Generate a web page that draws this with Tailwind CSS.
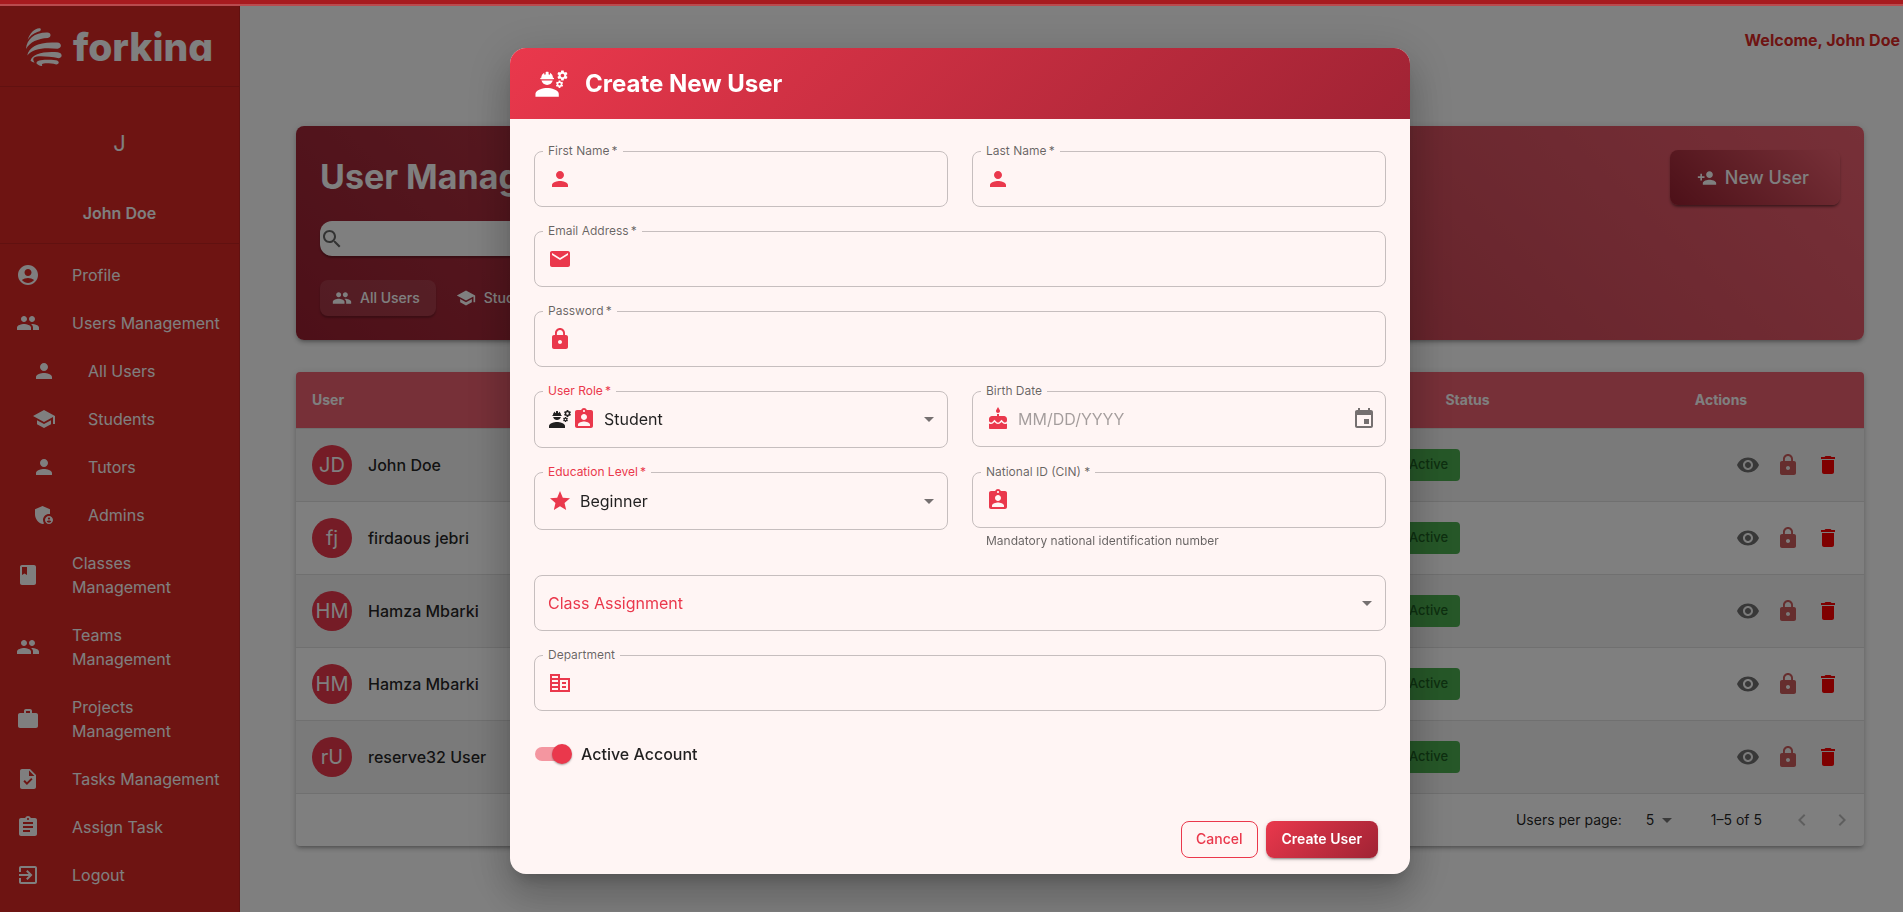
<!DOCTYPE html>
<html lang="en">
<head>
<meta charset="utf-8">
<meta name="viewport" content="width=device-width, initial-scale=1">
<title>Forkina – User Management</title>
<script src="https://cdn.jsdelivr.net/npm/@tailwindcss/browser@4"></script>
</head>
<body class="min-h-screen bg-white font-['Inter',sans-serif] text-base text-black/87">

<svg class="hidden" aria-hidden="true">
  <symbol id="account" viewBox="0 0 24 24"><path d="M12 2C6.48 2 2 6.48 2 12s4.48 10 10 10 10-4.48 10-10S17.52 2 12 2zm0 4c1.93 0 3.5 1.57 3.5 3.5S13.93 13 12 13s-3.5-1.57-3.5-3.5S10.07 6 12 6zm0 14c-2.03 0-4.43-.82-6.14-2.88C7.55 15.8 9.68 15 12 15s4.45.8 6.14 2.12C16.43 19.18 14.03 20 12 20z"/></symbol>
  <symbol id="people" viewBox="0 0 24 24"><path d="M16 11c1.66 0 2.99-1.34 2.99-3S17.66 5 16 5c-1.66 0-3 1.34-3 3s1.34 3 3 3zm-8 0c1.66 0 2.99-1.34 2.99-3S9.66 5 8 5C6.34 5 5 6.34 5 8s1.34 3 3 3zm0 2c-2.33 0-7 1.17-7 3.5V19h14v-2.5c0-2.33-4.67-3.5-7-3.5zm8 0c-.29 0-.62.02-.97.05 1.16.84 1.97 1.97 1.97 3.45V19h6v-2.5c0-2.33-4.67-3.5-7-3.5z"/></symbol>
  <symbol id="person" viewBox="0 0 24 24"><path d="M12 12c2.21 0 4-1.79 4-4s-1.79-4-4-4-4 1.79-4 4 1.79 4 4 4zm0 2c-2.67 0-8 1.34-8 4v2h16v-2c0-2.66-5.33-4-8-4z"/></symbol>
  <symbol id="person-add" viewBox="0 0 24 24"><path d="M15 12c2.21 0 4-1.79 4-4s-1.79-4-4-4-4 1.79-4 4 1.79 4 4 4zm-9-2V7H4v3H1v2h3v3h2v-3h3v-2H6zm9 4c-2.67 0-8 1.34-8 4v2h16v-2c0-2.66-5.33-4-8-4z"/></symbol>
  <symbol id="school" viewBox="0 0 24 24"><path d="M5 13.18v4L12 21l7-3.82v-4L12 17l-7-3.82zM12 3 1 9l11 6 9-4.91V17h2V9L12 3z"/></symbol>
  <symbol id="admin" viewBox="0 0 24 24"><path d="M17 11c.34 0 .67.04 1 .09V6.27L10.5 3 3 6.27v4.91c0 4.54 3.2 8.79 7.5 9.82.55-.13 1.08-.32 1.6-.55-.69-.98-1.1-2.17-1.1-3.45 0-3.31 2.69-6 6-6z"/><path d="M17 13c-2.21 0-4 1.79-4 4s1.79 4 4 4 4-1.79 4-4-1.79-4-4-4zm0 1.38c.62 0 1.12.51 1.12 1.12s-.51 1.12-1.12 1.12-1.12-.51-1.12-1.12.5-1.12 1.12-1.12zm0 5.37c-.93 0-1.74-.46-2.24-1.17.05-.72 1.51-1.08 2.24-1.08s2.19.36 2.24 1.08c-.5.71-1.31 1.17-2.24 1.17z"/></symbol>
  <symbol id="class" viewBox="0 0 24 24"><path d="M18 2H6c-1.1 0-2 .9-2 2v16c0 1.1.9 2 2 2h12c1.1 0 2-.9 2-2V4c0-1.1-.9-2-2-2zM6 4h5v8l-2.500-1.500L6 12V4z"/></symbol>
  <symbol id="work" viewBox="0 0 24 24"><path d="M20 6h-4V4c0-1.110-.89-2-2-2h-4c-1.110 0-2 .89-2 2v2H4c-1.110 0-1.990.89-1.990 2L2 19c0 1.110.89 2 2 2h16c1.110 0 2-.89 2-2V8c0-1.110-.89-2-2-2zm-6 0h-4V4h4v2z"/></symbol>
  <symbol id="task" viewBox="0 0 24 24"><path d="M14 2H6c-1.100 0-1.990.9-1.990 2L4 20c0 1.100.89 2 1.990 2H18c1.100 0 2-.9 2-2V8l-6-6zm-3.060 16L7.400 14.460l1.410-1.410 2.120 2.120 4.240-4.240 1.410 1.410L10.940 18zM13 9V3.500L18.500 9H13z"/></symbol>
  <symbol id="assignment" viewBox="0 0 24 24"><path d="M19 3h-4.180C14.400 1.840 13.300 1 12 1c-1.300 0-2.400.84-2.820 2H5c-1.100 0-2 .9-2 2v14c0 1.100.9 2 2 2h14c1.100 0 2-.9 2-2V5c0-1.100-.9-2-2-2zm-7 0c.55 0 1 .45 1 1s-.45 1-1 1-1-.45-1-1 .45-1 1-1zm2 14H7v-2h7v2zm3-4H7v-2h10v2zm0-4H7V7h10v2z"/></symbol>
  <symbol id="logout" viewBox="0 0 24 24"><path d="M10.090 15.590 11.500 17l5-5-5-5-1.410 1.410L12.670 11H3v2h9.670l-2.580 2.590zM19 3H5c-1.110 0-2 .9-2 2v4h2V5h14v14H5v-4H3v4c0 1.100.89 2 2 2h14c1.100 0 2-.9 2-2V5c0-1.100-.9-2-2-2z"/></symbol>
  <symbol id="search" viewBox="0 0 24 24"><path d="M15.500 14h-.79l-.28-.27C15.410 12.590 16 11.110 16 9.500 16 5.910 13.090 3 9.500 3S3 5.910 3 9.500 5.910 16 9.500 16c1.610 0 3.090-.59 4.230-1.570l.27.28v.79l5 4.990L20.490 19l-4.990-5zm-6 0C7.010 14 5 11.990 5 9.500S7.010 5 9.500 5 14 7.010 14 9.500 11.990 14 9.500 14z"/></symbol>
  <symbol id="eye" viewBox="0 0 24 24"><path d="M12 4.500C7 4.500 2.730 7.610 1 12c1.730 4.390 6 7.500 11 7.500s9.270-3.110 11-7.500c-1.730-4.390-6-7.500-11-7.500zM12 17c-2.760 0-5-2.240-5-5s2.240-5 5-5 5 2.240 5 5-2.240 5-5 5zm0-8c-1.660 0-3 1.340-3 3s1.340 3 3 3 3-1.340 3-3-1.340-3-3-3z"/></symbol>
  <symbol id="lock" viewBox="0 0 24 24"><path d="M18 8h-1V6c0-2.760-2.240-5-5-5S7 3.240 7 6v2H6c-1.100 0-2 .9-2 2v10c0 1.100.9 2 2 2h12c1.100 0 2-.9 2-2V10c0-1.100-.9-2-2-2zm-6 9c-1.100 0-2-.9-2-2s.9-2 2-2 2 .9 2 2-.9 2-2 2zm3.100-9H8.900V6c0-1.710 1.390-3.100 3.100-3.100s3.100 1.390 3.100 3.100v2z"/></symbol>
  <symbol id="delete" viewBox="0 0 24 24"><path d="M6 19c0 1.100.9 2 2 2h8c1.100 0 2-.9 2-2V7H6v12zM19 4h-3.500l-1-1h-5l-1 1H5v2h14V4z"/></symbol>
  <symbol id="check" viewBox="0 0 24 24"><path d="M12 2C6.480 2 2 6.480 2 12s4.480 10 10 10 10-4.480 10-10S17.520 2 12 2zm-2 15-5-5 1.410-1.410L10 14.170l7.590-7.590L19 8l-9 9z"/></symbol>
  <symbol id="mail" viewBox="0 0 24 24"><path d="M20 4H4c-1.100 0-1.990.9-1.990 2L2 18c0 1.100.9 2 2 2h16c1.100 0 2-.9 2-2V6c0-1.100-.9-2-2-2zm0 4-8 5-8-5V6l8 5 8-5v2z"/></symbol>
  <symbol id="badge" viewBox="0 0 24 24"><path d="M19 3h-4.180C14.400 1.840 13.300 1 12 1c-1.300 0-2.400.84-2.820 2H5c-1.100 0-2 .9-2 2v14c0 1.100.9 2 2 2h14c1.100 0 2-.9 2-2V5c0-1.100-.9-2-2-2zm-7 0c.55 0 1 .45 1 1s-.45 1-1 1-1-.45-1-1 .45-1 1-1zm0 4c1.660 0 3 1.340 3 3s-1.340 3-3 3-3-1.340-3-3 1.340-3 3-3zm6 12H6v-1.400c0-2 4-3.100 6-3.100s6 1.100 6 3.100V19z"/></symbol>
  <symbol id="star" viewBox="0 0 24 24"><path d="M12 17.270 18.180 21l-1.640-7.030L22 9.240l-7.190-.61L12 2 9.190 8.630 2 9.240l5.460 4.730L5.820 21z"/></symbol>
  <symbol id="cake" viewBox="0 0 24 24"><path d="M12 6c1.110 0 2-.9 2-2 0-.38-.1-.73-.29-1.030L12 0l-1.710 2.970c-.19.3-.29.65-.29 1.030 0 1.100.9 2 2 2zm4.600 9.990-1.070-1.070-1.080 1.070c-1.300 1.300-3.580 1.310-4.890 0l-1.070-1.070-1.090 1.070C6.750 16.640 5.880 17 4.960 17c-.73 0-1.400-.23-1.960-.61V21c0 .55.45 1 1 1h16c.55 0 1-.45 1-1v-4.610c-.56.38-1.230.61-1.960.61-.92 0-1.790-.36-2.440-1.010zM18 9h-5V7h-2v2H6c-1.660 0-3 1.340-3 3v1.540c0 1.080.88 1.960 1.960 1.960.52 0 1.020-.2 1.380-.57l2.140-2.130 2.130 2.130c.74.74 2.030.74 2.770 0l2.140-2.130 2.130 2.130c.37.37.86.57 1.380.57 1.080 0 1.960-.88 1.960-1.960V12C21 10.340 19.660 9 18 9z"/></symbol>
  <symbol id="event" viewBox="0 0 24 24"><path d="M17 12h-5v5h5v-5zM16 1v2H8V1H6v2H5c-1.110 0-1.990.9-1.990 2L3 19c0 1.100.89 2 2 2h14c1.100 0 2-.9 2-2V5c0-1.100-.9-2-2-2h-1V1h-2zm3 18H5V8h14v11z"/></symbol>
  <symbol id="business" viewBox="0 0 24 24"><path d="M12 7V3H2v18h20V7H12zm-2 12H4v-2h6v2zm0-4H4v-2h6v2zm0-4H4V9h6v2zm0-4H4V5h6v2zm10 12h-8V9h8v10zm-2-8h-4v2h4v-2zm0 4h-4v2h4v-2z"/></symbol>
  <symbol id="arrow" viewBox="0 0 24 24"><path d="m7 10 5 5 5-5z"/></symbol>
  <symbol id="left" viewBox="0 0 24 24"><path d="M15.410 16.590 10.830 12l4.580-4.590L14 6l-6 6 6 6z"/></symbol>
  <symbol id="right" viewBox="0 0 24 24"><path d="M8.590 16.590 13.170 12 8.590 7.410 10 6l6 6-6 6z"/></symbol>
  <symbol id="engineering" viewBox="0 0 24 24"><path d="M9 15c-2.670 0-8 1.340-8 4v2h16v-2c0-2.660-5.330-4-8-4z"/><path d="M22.100 6.840c.01-.11.02-.22.02-.34 0-.12-.01-.23-.03-.34l.74-.58c.07-.05.08-.15.04-.22l-.7-1.210c-.04-.08-.14-.1-.21-.08l-.86.35c-.18-.14-.38-.25-.59-.34l-.13-.93c-.02-.09-.09-.15-.18-.15h-1.400c-.09 0-.16.06-.17.15l-.13.93c-.21.09-.41.21-.59.34l-.87-.35c-.08-.03-.17 0-.21.08l-.7 1.210c-.04.08-.03.17.04.22l.74.58c-.02.11-.03.23-.03.34 0 .11.01.23.03.34l-.74.58c-.07.05-.08.15-.04.22l.7 1.210c.04.08.14.1.21.08l.87-.35c.18.14.38.25.59.34l.13.93c.01.09.08.15.17.15h1.400c.09 0 .16-.06.17-.15l.13-.93c.21-.09.41-.21.59-.34l.87.35c.08.03.17 0 .21-.08l.7-1.210c.04-.08.03-.17-.04-.22l-.73-.58zm-2.600.91c-.69 0-1.250-.56-1.250-1.250s.56-1.250 1.250-1.250 1.250.56 1.250 1.250-.56 1.250-1.250 1.250z"/><path d="m19.920 11.680-.5-.87c-.03-.06-.1-.08-.15-.06l-.62.25c-.13-.1-.27-.18-.42-.24l-.09-.66c-.02-.06-.08-.1-.14-.1h-1c-.06 0-.11.04-.12.11l-.09.66c-.15.06-.29.15-.42.24l-.62-.25c-.06-.02-.12 0-.15.06l-.5.87c-.03.06-.02.12.03.16l.53.41c-.01.08-.02.16-.02.24 0 .08.01.17.02.24l-.53.41c-.05.04-.06.11-.03.16l.5.87c.03.06.1.08.15.06l.62-.25c.13.1.27.18.42.24l.09.66c.01.07.06.11.12.11h1c.06 0 .12-.04.12-.11l.09-.66c.15-.06.29-.15.42-.24l.62.25c.06.02.12 0 .15-.06l.5-.87c.03-.06.02-.12-.03-.16l-.52-.41c.01-.08.02-.16.02-.24 0-.08-.01-.17-.02-.24l.53-.41c.05-.04.06-.11.04-.17zm-2.420 1.650c-.46 0-.83-.38-.83-.83 0-.46.38-.83.83-.83s.83.38.83.83c0 .46-.37.83-.83.83z"/><path d="M4.740 9h8.530c.27 0 .49-.22.49-.49v-.02c0-.27-.22-.49-.49-.49H13c0-1.480-.81-2.750-2-3.450v.95c0 .28-.22.5-.5.5s-.5-.22-.5-.5V4.140C9.680 4.060 9.350 4 9 4s-.68.06-1 .14V5.500c0 .28-.22.5-.5.5S7 5.780 7 5.500v-.95C5.810 5.250 5 6.520 5 8h-.26c-.27 0-.49.22-.49.49v.03c0 .26.22.48.49.48zM9 13c1.860 0 3.410-1.280 3.860-3H5.140c.45 1.720 2 3 3.860 3z"/></symbol>
</svg>

<div class="flex h-screen overflow-hidden pt-1.5">
  <!-- Sidebar -->
  <aside class="flex w-60 shrink-0 flex-col border-r border-black/12 bg-[#dd2825] text-white">
    <div class="flex h-[81px] shrink-0 items-center justify-center gap-2 border-b border-black/12">
      <svg class="size-[39px] shrink-0" viewBox="0 0 120 120" fill="currentColor" aria-hidden="true">
        <path d="M5 40C12 18 26 5 41 4c6 0 6 7 1 9C28 17 14 24 5 40z"/>
        <path d="M0 68C2 36 28 16 66 17c12 0 13 15 1 17C36 36 12 46 0 68z"/>
        <path d="M4 88C8 60 42 44 96 48c15 1 15 18 1 19C50 62 20 68 4 88z"/>
        <path d="M14 104C18 84 54 74 98 78c14 2 16 16 3 18C66 90 32 88 25 94c-5 4-2 12 2 16-5-1-9-3-13-6z"/>
        <path d="M33 113C28 102 52 98 92 102c12 2 11 12 1 13-22-5-40-4-43-1-2 3-1 4 1 7-7-2-13-3-18-8z"/>
      </svg>
      <span class="text-[39px] leading-none font-extrabold [font-feature-settings:'cv11']">forkina</span>
    </div>
    <div class="flex h-[157px] shrink-0 flex-col items-center border-b border-black/12 pt-4">
      <div class="flex size-20 items-center justify-center rounded-full text-[22px]">J</div>
      <p class="mt-[18px] leading-6 font-semibold">John Doe</p>
    </div>
    <nav class="pt-[7px] leading-6" aria-label="Main">
      <a href="#" class="flex items-center gap-8 px-4 py-3"><svg class="size-6 shrink-0 fill-current"><use href="#account"/></svg>Profile</a>
      <a href="#" class="flex items-center gap-8 px-4 py-3"><svg class="size-6 shrink-0 fill-current"><use href="#people"/></svg>Users Management</a>
      <a href="#" class="flex items-center gap-8 py-3 pr-4 pl-8"><svg class="size-6 shrink-0 fill-current"><use href="#person"/></svg>All Users</a>
      <a href="#" class="flex items-center gap-8 py-3 pr-4 pl-8"><svg class="size-6 shrink-0 fill-current"><use href="#school"/></svg>Students</a>
      <a href="#" class="flex items-center gap-8 py-3 pr-4 pl-8"><svg class="size-6 shrink-0 fill-current"><use href="#person"/></svg>Tutors</a>
      <a href="#" class="flex items-center gap-8 py-3 pr-4 pl-8"><svg class="size-6 shrink-0 fill-current"><use href="#admin"/></svg>Admins</a>
      <a href="#" class="flex items-center gap-8 px-4 py-3"><svg class="size-6 shrink-0 fill-current"><use href="#class"/></svg>Classes<br>Management</a>
      <a href="#" class="flex items-center gap-8 px-4 py-3"><svg class="size-6 shrink-0 fill-current"><use href="#people"/></svg>Teams<br>Management</a>
      <a href="#" class="flex items-center gap-8 px-4 py-3"><svg class="size-6 shrink-0 fill-current"><use href="#work"/></svg>Projects<br>Management</a>
      <a href="#" class="flex items-center gap-8 px-4 py-3"><svg class="size-6 shrink-0 fill-current"><use href="#task"/></svg>Tasks Management</a>
      <a href="#" class="flex items-center gap-8 px-4 py-3"><svg class="size-6 shrink-0 fill-current"><use href="#assignment"/></svg>Assign Task</a>
      <a href="#" class="flex items-center gap-8 px-4 py-3"><svg class="size-6 shrink-0 fill-current"><use href="#logout"/></svg>Logout</a>
    </nav>
  </aside>

  <!-- Page content -->
  <main class="min-w-0 flex-1">
    <header class="flex h-[120px] items-start justify-end pt-[22px] pr-[3px]">
      <p class="leading-6 font-bold text-[#dd2825]">Welcome, John Doe</p>
    </header>

    <div class="flex flex-col gap-8 pr-[39px] pl-14">
      <section class="flex items-start justify-between rounded-lg bg-linear-45 from-[#9a2031] to-[#ee6070] p-6 text-white shadow-[0_3px_3px_-2px_rgba(0,0,0,0.2),0_3px_4px_rgba(0,0,0,0.14),0_1px_8px_rgba(0,0,0,0.12)]">
        <div>
          <h1 class="mb-[18px] text-[34px] leading-[53px] font-bold">User Management</h1>
          <label class="mb-6 flex h-[35px] w-[400px] items-center rounded-xl bg-white shadow-[0_2px_2px_rgba(0,0,0,0.3)]">
            <svg class="size-6 shrink-0 fill-black/60"><use href="#search"/></svg>
            <input type="search" aria-label="Search users" class="h-full min-w-0 flex-1 bg-transparent px-2 text-black outline-none">
          </label>
          <div class="flex gap-2 text-sm font-medium">
            <button type="button" class="flex h-9 items-center gap-2 rounded-lg bg-white/10 px-3 pr-4 shadow-[0_2px_2px_rgba(0,0,0,0.25)]"><svg class="size-5 fill-current"><use href="#people"/></svg>All Users</button>
            <button type="button" class="flex h-9 items-center gap-2 rounded-lg px-3 pr-4"><svg class="size-5 fill-current"><use href="#school"/></svg>Students</button>
          </div>
        </div>
        <button type="button" class="flex h-[55px] items-center gap-2 rounded-lg bg-linear-45 from-[#9a2031] to-[#ee6070] pr-[31px] pl-[27px] text-lg font-medium shadow-[0_3px_3px_-2px_rgba(0,0,0,0.4),0_2px_3px_rgba(0,0,0,0.24)]"><svg class="size-5 fill-current"><use href="#person-add"/></svg>New User</button>
      </section>

      <section class="overflow-hidden rounded shadow-[0_3px_3px_-2px_rgba(0,0,0,0.2),0_3px_4px_rgba(0,0,0,0.14),0_1px_8px_rgba(0,0,0,0.12)]">
        <table class="w-full table-fixed border-separate border-spacing-0">
          <colgroup><col><col class="w-[221px]"><col class="w-[286px]"></colgroup>
          <thead>
            <tr class="bg-[#ee6070] text-sm font-bold text-white">
              <th class="h-[57px] border-b border-[#e0e0e0] px-4 text-left">User</th>
              <th class="h-[57px] border-b border-[#e0e0e0] px-4 text-center">Status</th>
              <th class="h-[57px] border-b border-[#e0e0e0] px-4 text-center">Actions</th>
            </tr>
          </thead>
          <tbody id="users"></tbody>
        </table>
        <div class="flex h-[52px] items-center justify-end pr-0.5 text-sm">
          <label for="per-page">Users per page:</label>
          <div class="ml-6 flex items-center">
            <select id="per-page" class="appearance-none bg-transparent outline-none"><option>5</option></select>
            <svg class="pointer-events-none size-6 fill-black/54"><use href="#arrow"/></svg>
          </div>
          <span class="mr-5 ml-8">1–5 of 5</span>
          <button type="button" aria-label="Previous page" disabled class="flex size-10 items-center justify-center"><svg class="size-6 fill-black/26"><use href="#left"/></svg></button>
          <button type="button" aria-label="Next page" disabled class="flex size-10 items-center justify-center"><svg class="size-6 fill-black/26"><use href="#right"/></svg></button>
        </div>
      </section>
    </div>
  </main>
</div>

<!-- Dialog -->
<div class="fixed inset-0 flex items-center justify-center bg-black/50 pt-2.5 pl-[17px]">
  <form role="dialog" aria-labelledby="dialog-title" class="w-full max-w-[900px] overflow-hidden rounded-2xl bg-[#fff5f4] shadow-[0_11px_15px_-7px_rgba(0,0,0,0.2),0_24px_38px_3px_rgba(0,0,0,0.14),0_9px_46px_8px_rgba(0,0,0,0.12)]">
    <div class="flex items-center gap-4 bg-linear-135 from-[#ea384c] to-[#a02334] px-6 py-4 text-white">
      <svg class="size-[35px] fill-current"><use href="#engineering"/></svg>
      <h2 id="dialog-title" class="text-2xl leading-[39px] font-bold">Create New User</h2>
    </div>

    <div class="grid grid-cols-2 items-start gap-6 px-6 pt-8 pb-12">
      <div class="relative flex h-14 items-center gap-2 rounded-lg border border-[#c6bebe] px-[13px]">
        <label for="first" class="absolute -top-[11px] left-2 bg-[#fff5f4] px-[5px] text-xs leading-5 text-black/60">First Name&#8201;*</label>
        <svg class="size-6 shrink-0 fill-[#ea384c]"><use href="#person"/></svg>
        <input id="first" type="text" class="h-full min-w-0 flex-1 bg-transparent outline-none">
      </div>
      <div class="relative flex h-14 items-center gap-2 rounded-lg border border-[#c6bebe] px-[13px]">
        <label for="last" class="absolute -top-[11px] left-2 bg-[#fff5f4] px-[5px] text-xs leading-5 text-black/60">Last Name&#8201;*</label>
        <svg class="size-6 shrink-0 fill-[#ea384c]"><use href="#person"/></svg>
        <input id="last" type="text" class="h-full min-w-0 flex-1 bg-transparent outline-none">
      </div>
      <div class="relative col-span-2 flex h-14 items-center gap-2 rounded-lg border border-[#c6bebe] px-[13px]">
        <label for="email" class="absolute -top-[11px] left-2 bg-[#fff5f4] px-[5px] text-xs leading-5 text-black/60">Email Address&#8201;*</label>
        <svg class="size-6 shrink-0 fill-[#ea384c]"><use href="#mail"/></svg>
        <input id="email" type="email" class="h-full min-w-0 flex-1 bg-transparent outline-none">
      </div>
      <div class="relative col-span-2 flex h-14 items-center gap-2 rounded-lg border border-[#c6bebe] px-[13px]">
        <label for="password" class="absolute -top-[11px] left-2 bg-[#fff5f4] px-[5px] text-xs leading-5 text-black/60">Password&#8201;*</label>
        <svg class="size-6 shrink-0 fill-[#ea384c]"><use href="#lock"/></svg>
        <input id="password" type="password" class="h-full min-w-0 flex-1 bg-transparent outline-none">
      </div>

      <div class="relative flex h-[57px] items-center rounded-lg border border-[#c6bebe] pr-1.5 pb-px pl-[13px]">
        <label for="role" class="absolute -top-[11px] left-2 bg-[#fff5f4] px-[5px] text-xs leading-5 text-[#ea384c]">User Role&#8201;*</label>
        <svg class="size-6 shrink-0 fill-black/87"><use href="#engineering"/></svg>
        <svg class="mr-2 size-6 shrink-0 fill-[#ea384c]"><use href="#badge"/></svg>
        <select id="role" class="h-full min-w-0 flex-1 appearance-none bg-transparent pb-px outline-none"><option>Student</option></select>
        <svg class="pointer-events-none size-6 fill-black/54"><use href="#arrow"/></svg>
      </div>
      <div class="relative flex h-14 items-center rounded-lg border border-[#c6bebe] pr-[9px] pl-[13px]">
        <label for="birth" class="absolute -top-[11px] left-2 bg-[#fff5f4] px-[5px] text-xs leading-5 text-black/60">Birth Date</label>
        <svg class="mr-2 size-6 shrink-0 fill-[#ea384c]"><use href="#cake"/></svg>
        <input id="birth" type="text" placeholder="MM/DD/YYYY" class="h-full min-w-0 flex-1 bg-transparent pb-px outline-none placeholder:text-black/36">
        <button type="button" aria-label="Choose date"><svg class="size-6 fill-black/54"><use href="#event"/></svg></button>
      </div>

      <div class="relative flex h-[58px] items-center rounded-lg border border-[#c6bebe] pr-1.5 pl-[13px]">
        <label for="level" class="absolute -top-[11px] left-2 bg-[#fff5f4] px-[5px] text-xs leading-5 text-[#ea384c]">Education Level&#8201;*</label>
        <svg class="mr-2 size-6 shrink-0 fill-[#ea384c]"><use href="#star"/></svg>
        <select id="level" class="h-full min-w-0 flex-1 appearance-none bg-transparent pb-px outline-none"><option>Beginner</option></select>
        <svg class="pointer-events-none size-6 fill-black/54"><use href="#arrow"/></svg>
      </div>
      <div>
        <div class="relative flex h-14 items-center gap-2 rounded-lg border border-[#c6bebe] px-[13px]">
          <label for="cin" class="absolute -top-[11px] left-2 bg-[#fff5f4] px-[5px] text-xs leading-5 text-black/60">National ID (CIN) *</label>
          <svg class="size-6 shrink-0 fill-[#ea384c]"><use href="#badge"/></svg>
          <input id="cin" type="text" aria-describedby="cin-help" class="h-full min-w-0 flex-1 bg-transparent outline-none">
        </div>
        <p id="cin-help" class="mt-[3px] pl-3.5 text-xs leading-5 text-black/60">Mandatory national identification number</p>
      </div>

      <div class="col-span-2 flex h-14 items-center rounded-lg border border-[#c6bebe] pr-1.5 pl-[13px]">
        <select aria-label="Class Assignment" class="h-full min-w-0 flex-1 appearance-none bg-transparent pb-px text-[#ea384c] outline-none"><option>Class Assignment</option></select>
        <svg class="pointer-events-none size-6 fill-black/54"><use href="#arrow"/></svg>
      </div>
      <div class="relative col-span-2 flex h-14 items-center gap-2 rounded-lg border border-[#c6bebe] px-[13px]">
        <label for="department" class="absolute -top-[11px] left-2 bg-[#fff5f4] px-[5px] text-xs leading-5 text-black/60">Department</label>
        <svg class="size-6 shrink-0 fill-[#ea384c]"><use href="#business"/></svg>
        <input id="department" type="text" class="h-full min-w-0 flex-1 bg-transparent outline-none">
      </div>

      <label class="col-span-2 flex h-[38px] items-center gap-[9px] pl-px font-medium">
        <input type="checkbox" role="switch" checked class="relative h-3.5 w-[37px] appearance-none before:absolute before:inset-y-0 before:left-0 before:w-[34px] before:rounded-full before:bg-[#ea384c]/50 after:absolute after:-top-[3px] after:right-0 after:size-5 after:rounded-full after:bg-[#ea384c] after:shadow-[0_1px_2px_rgba(0,0,0,0.35)]">
        Active Account
      </label>
    </div>

    <div class="flex justify-end gap-2 px-8 pb-4 text-sm">
      <button type="button" class="h-[37px] rounded-lg border border-[#ea384c] px-3.5 pb-px font-medium text-[#ea384c]">Cancel</button>
      <button type="submit" class="h-[37px] rounded-lg bg-linear-135 from-[#ea384c] to-[#a02334] px-4 pb-px font-semibold text-white shadow-[0_3px_1px_-2px_rgba(0,0,0,0.2),0_2px_2px_rgba(0,0,0,0.14),0_1px_5px_rgba(0,0,0,0.12)]">Create User</button>
    </div>
  </form>
</div>

<!-- Loading bar -->
<div class="fixed inset-x-0 top-0 h-1.5 border-b-2 border-[#b94b4e] bg-[#a71b1f]"></div>

<script>
  const users = [["JD", "John Doe"], ["fj", "firdaous jebri"], ["HM", "Hamza Mbarki"], ["HM", "Hamza Mbarki"], ["rU", "reserve32 User"]];
  document.getElementById("users").innerHTML = users.map(([initials, name]) => `
    <tr class="odd:bg-[#f4f4f4]">
      <td class="h-[73px] border-b border-[#e0e0e0] px-4"><div class="flex items-center gap-4"><span class="flex size-10 items-center justify-center rounded-full bg-[#ea384c] text-xl text-white">${initials}</span><span class="font-medium">${name}</span></div></td>
      <td class="h-[73px] border-b border-[#e0e0e0] px-4"><span class="inline-flex h-8 items-center gap-2 rounded bg-[#4caf50] pr-3 pl-1 align-middle text-[13px] font-medium text-[#1b5e20]"><svg class="size-6 fill-current"><use href="#check"/></svg>Active</span></td>
      <td class="h-[73px] border-b border-[#e0e0e0] px-4"><div class="flex justify-end">
        <button type="button" aria-label="View" class="flex size-10 items-center justify-center"><svg class="size-6 fill-[#707070]"><use href="#eye"/></svg></button>
        <button type="button" aria-label="Lock" class="flex size-10 items-center justify-center"><svg class="size-6 fill-[#cd5c5c]"><use href="#lock"/></svg></button>
        <button type="button" aria-label="Delete" class="flex size-10 items-center justify-center"><svg class="size-6 fill-[#ff0000]"><use href="#delete"/></svg></button>
      </div></td>
    </tr>`).join("");
</script>
</body>
</html>
